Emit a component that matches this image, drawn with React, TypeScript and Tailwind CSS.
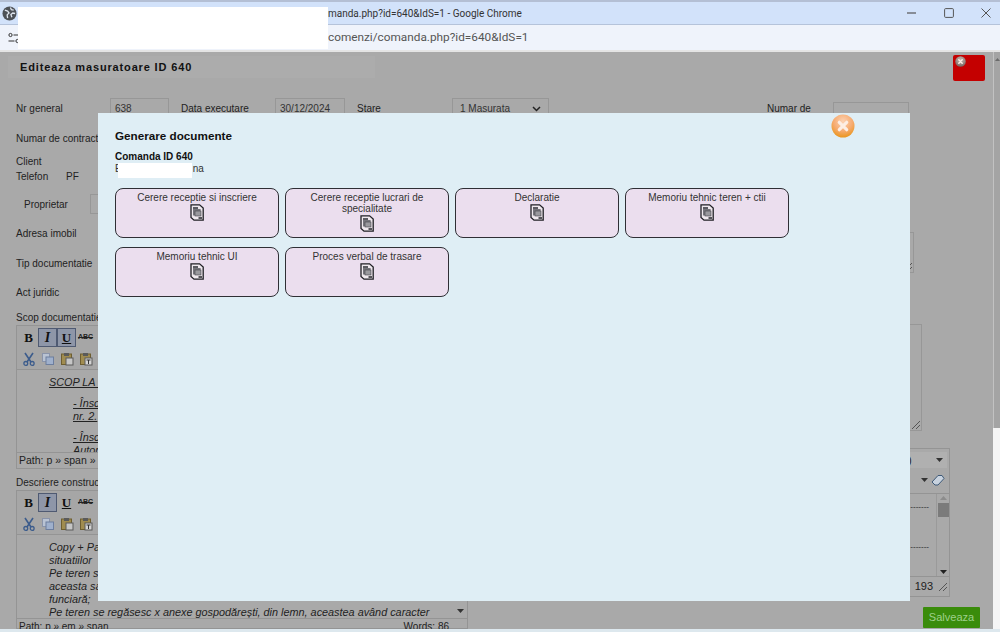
import React from "react";

function DocIcon() {
  return (
    <svg width="14" height="17" viewBox="0 0 14 17" className="block">
      <path d="M1 .8h8.6L13.2 4v12.200H4L1 13.400z" fill="#efe9ee" stroke="#1f1f24" strokeWidth="1.300" />
      <rect x="3" y="3" width="5" height="2" fill="#5c5c62" />
      <rect x="3" y="5" width="7.600" height="6.500" fill="#76767c" />
      <rect x="5" y="7" width="6" height="5" fill="#9a9a9e" stroke="#44444a" strokeWidth=".6" />
      <path d="M8.500 13h3.500v2h-3.500z" fill="#55555a" />
    </svg>
  );
}

function OrangeClose({ gray = false }: { gray?: boolean }) {
  const id = gray ? "gcl" : "ocl";
  return (
    <svg viewBox="0 0 24 24" className="block w-full h-full">
      <defs>
        <radialGradient id={id} cx="50%" cy="30%" r="75%">
          <stop offset="0%" stopColor={gray ? "#c0b0a8" : "#fcd2b4"} />
          <stop offset="55%" stopColor={gray ? "#9d8c86" : "#f6ab70"} />
          <stop offset="100%" stopColor={gray ? "#6b5a55" : "#e8920f"} />
        </radialGradient>
      </defs>
      <circle cx="12" cy="12" r="11.500" fill={`url(#${id})`} />
      <path d="M8.300 8.300l7.400 7.400M15.700 8.300l-7.400 7.400" stroke="#fdeee4" strokeWidth="3.200" strokeLinecap="round" />
    </svg>
  );
}

function Tb({ children, on }: { children: React.ReactNode; on?: boolean }) {
  return (
    <span className={`w-[19px] h-[19px] flex items-center justify-center ${on ? "bg-[#8e96a8] border border-[#4f5a72]" : "border border-transparent"}`}>
      {children}
    </span>
  );
}

function SmallIcon({ kind }: { kind: "cut" | "copy" | "paste" | "pastet" }) {
  if (kind === "cut")
    return (
      <svg width="14" height="14" viewBox="0 0 14 14">
        <path d="M3 1l6 9M11 1L5 10" stroke="#3c5c8c" strokeWidth="1.600" />
        <circle cx="3.800" cy="11.400" r="1.900" fill="none" stroke="#3c5c8c" strokeWidth="1.300" />
        <circle cx="10.200" cy="11.400" r="1.900" fill="none" stroke="#3c5c8c" strokeWidth="1.300" />
      </svg>
    );
  if (kind === "copy")
    return (
      <svg width="14" height="14" viewBox="0 0 14 14">
        <rect x="1.500" y="1.500" width="7" height="8" fill="#b9c3d3" stroke="#8a94aa" />
        <rect x="5" y="5" width="7.500" height="7.500" fill="#9fb0cc" stroke="#6d7e9e" />
      </svg>
    );
  return (
    <svg width="14" height="14" viewBox="0 0 14 14">
      <rect x="1.500" y="2" width="10" height="10.500" fill="#a08c50" stroke="#6e5e30" />
      <rect x="4" y="1" width="5" height="3" fill="#5a5a5a" />
      <rect x="6" y="6" width="7" height="7" fill={kind === "paste" ? "#c6c6c6" : "#d4d4d4"} stroke="#5a5a5a" />
      {kind === "pastet" && <path d="M7.500 8h4M9.500 8v4" stroke="#333" strokeWidth="1" />}
    </svg>
  );
}

function Toolbar({ underlineOn }: { underlineOn?: boolean }) {
  return (
    <div className="h-[44px] pt-[1px] pl-[2px] border-b border-[#949494] bg-[#a6a6a6]">
      <div className="flex items-center h-[21px]">
        <Tb><b className="text-[13px] font-['Liberation_Serif'] text-[#111]">B</b></Tb>
        <Tb on><i className="text-[14px] font-bold font-['Liberation_Serif'] text-[#111]">I</i></Tb>
        <Tb on={underlineOn}><u className="text-[13px] font-bold font-['Liberation_Serif'] text-[#111]">U</u></Tb>
        <Tb><span className="text-[7px] font-bold line-through text-[#222]">ABC</span></Tb>
      </div>
      <div className="flex items-center gap-[5px] h-[21px] pl-[3px]">
        <SmallIcon kind="cut" />
        <SmallIcon kind="copy" />
        <SmallIcon kind="paste" />
        <SmallIcon kind="pastet" />
      </div>
    </div>
  );
}

const Field = ({ w, children }: { w: string; children?: React.ReactNode }) => (
  <span className={`${w} h-[21px] border border-[#979797] flex items-center pl-[4px] text-[#333]`}>{children}</span>
);

function Grip() {
  return (
    <svg width="10" height="10" viewBox="0 0 10 10" className="block">
      <path d="M1 9l8-8M5 9l4-4" stroke="#555" strokeWidth="1" />
    </svg>
  );
}

function Docbtn({ t }: { t: string }) {
  return (
    <button className="w-[164px] h-[50px] flex flex-col items-center pt-[3px] px-[10px] bg-[#ebdeee] border border-[#2f2f35] rounded-[8px] text-[10px] leading-[11px] text-[#333]">
      <span className="mb-[1px]">{t}</span>
      <DocIcon />
    </button>
  );
}

export default function App() {
  return (
    <div className="relative w-[1000px] h-[632px] overflow-hidden flex flex-col bg-[#a9a9a9] font-['Liberation_Sans',sans-serif] text-[10px] text-[#222]">
      {/* title bar */}
      <div className="h-[25px] shrink-0 flex items-center bg-[#d2e2fa] border-t-[2px] border-[#b4bfd4] border-b border-b-[#b5c3da] font-['Roboto',sans-serif]">
        <svg width="15" height="15" viewBox="0 0 16 16" className="ml-[2px]">
          <circle cx="8" cy="8" r="7.500" fill="#4d5156" />
          <path d="M3 4.500l3 1 1.500 2-2 2 .5 3.500M9 1.500l1 2.500 2.500.5M14 8l-2.500-.5-2 1.500 1 3" stroke="#dfe5ee" strokeWidth="1.400" fill="none" />
        </svg>
        <span className="ml-[311px] text-[10px] text-[#333]">manda.php?id=640&amp;IdS=1 - Google Chrome</span>
        <div className="ml-auto flex items-center gap-[27px] pr-[9px] text-[#333]">
          <svg width="10" height="10" viewBox="0 0 10 10"><path d="M0 5h9" stroke="#555" strokeWidth="1.200" /></svg>
          <svg width="10" height="10" viewBox="0 0 10 10"><rect x=".6" y=".6" width="8.800" height="8.800" rx="1" fill="none" stroke="#555" strokeWidth="1" /></svg>
          <svg width="10" height="10" viewBox="0 0 10 10"><path d="M.5.5l9 9M9.500.5l-9 9" stroke="#555" strokeWidth="1" /></svg>
        </div>
      </div>
      {/* url bar */}
      <div className="h-[27px] shrink-0 flex items-center bg-[#eff3fb] border-b-[2px] border-[#e4e4e4] font-['Roboto',sans-serif]">
        <svg width="12" height="12" viewBox="0 0 12 12" className="ml-[8px]">
          <circle cx="2.500" cy="3" r="1.600" fill="none" stroke="#333" />
          <path d="M5.500 3h6M.5 9h6" stroke="#333" strokeWidth="1.200" />
          <circle cx="9.500" cy="9" r="1.600" fill="none" stroke="#333" />
        </svg>
        <span className="ml-[308px] text-[11.800px] text-[#555]">comenzi/comanda.php?id=640&amp;IdS=1</span>
      </div>

      {/* page */}
      <div className="flex-1 flex min-h-0">
        <div className="flex-1 min-w-0 flex flex-col overflow-hidden bg-[#a9a9a9]">
          <div className="flex justify-between shrink-0 pt-[4px] pl-[8px] pr-[8px]">
            <div className="w-[367px] h-[22px] bg-[#acacac] flex items-center pl-[12px] font-bold text-[11px] tracking-[0.85px] text-[#111]">
              Editeaza masuratoare ID 640
            </div>
            <div className="w-[32px] h-[26px] -mt-[1px] bg-[#c40000] rounded-[2px] pl-[2px] pt-[1px]">
              <div className="w-[11px] h-[11px]"><OrangeClose gray /></div>
            </div>
          </div>

          {/* row: general */}
          <div className="flex items-center h-[21px] mt-[17px] pl-[16px] shrink-0">
            <span className="w-[94px]">Nr general</span>
            <Field w="w-[59px]">638</Field>
            <span className="ml-[12px] w-[94px]">Data executare</span>
            <Field w="w-[70px]">30/12/2024</Field>
            <span className="ml-[12px] w-[95px]">Stare</span>
            <span className="w-[97px] h-[21px] border border-[#979797] flex items-center justify-between px-[7px] text-[#333]">
              1 Masurata
              <svg width="9" height="6" viewBox="0 0 9 6"><path d="M1 1l3.500 3.500L8 1" fill="none" stroke="#222" strokeWidth="1.500" /></svg>
            </span>
            <span className="ml-[218px] w-[66px]">Numar de</span>
            <span className="w-[76px] h-[21px] mt-[8px] border border-[#979797]" />
          </div>

          <div className="h-[12px] mt-[14px] pl-[16px] leading-[12px] shrink-0">Numar de contract</div>
          <div className="h-[12px] mt-[11px] pl-[16px] leading-[12px] shrink-0">Client</div>
          <div className="h-[12px] mt-[3px] pl-[16px] leading-[12px] flex shrink-0">
            <span className="w-[50px]">Telefon</span>
            <span>PF</span>
          </div>
          <div className="flex items-center h-[20px] mt-[11px] pl-[24px] shrink-0">
            <span className="w-[66px]">Proprietar</span>
            <span className="w-[20px] h-[20px] border border-[#979797]" />
          </div>

          {/* address + type rows, with the long textarea on the right */}
          <div className="flex pl-[16px] shrink-0 h-[87px] mt-[13px]">
            <div className="w-[82px] flex flex-col gap-[17px] pt-[1px] leading-[12px]">
              <span className="h-[12px]">Adresa imobil</span>
              <span className="h-[12px] mt-[1px] whitespace-nowrap">Tip documentatie</span>
              <span className="h-[12px]">Act juridic</span>
            </div>
            <div className="ml-auto mr-[79px] mt-[5px] w-[100px] h-[41px] border border-[#979797] flex items-end justify-end">
              <Grip />
            </div>
          </div>

          {/* editors */}
          <div className="flex flex-1 min-h-0 pl-[16px] pr-[43px]">
            <div className="w-[452px] shrink-0 flex flex-col">
              <div className="h-[13px] leading-[12px] shrink-0 -mt-[2px]">Scop documentatie</div>
              <div className="h-[144px] shrink-0 border border-[#949494] flex flex-col">
                <Toolbar underlineOn />
                <div className="h-[83px] pl-[32px] pt-[6px] italic text-[10.850px] leading-[13px] text-[#222] overflow-hidden">
                  <div className="underline">SCOP LA RECEPTIE</div>
                  <div className="underline pl-[24px] mt-[8px]">- Înscriere</div>
                  <div className="underline pl-[24px]">nr. 2.</div>
                  <div className="underline pl-[24px] mt-[8px]">- Înscriere</div>
                  <div className="pl-[24px]">Autorizatie</div>
                </div>
                <div className="h-[16px] px-[2px] flex items-center border-t border-[#949494] text-[10.500px] text-[#222]">Path: p » span » em</div>
              </div>
              <div className="h-[13px] leading-[12px] mt-[8px] shrink-0">Descriere constructii</div>
              <div className="flex-1 border border-[#949494] flex flex-col min-h-0">
                <Toolbar />
                <div className="h-[83px] shrink-0 relative flex">
                  <div className="flex-1 pl-[32px] pt-[6px] italic text-[10.850px] leading-[13px] overflow-hidden">
                    <div>Copy + Paste</div>
                    <div>situatiilor</div>
                    <div>Pe teren se</div>
                    <div>aceasta sa</div>
                    <div>funciară;</div>
                    <div className="whitespace-nowrap">Pe teren se regăsesc x anexe gospodărești, din lemn, aceastea având caracter</div>
                  </div>
                  <div className="w-[13px] flex items-end justify-center pb-[5px]">
                    <svg width="7" height="4" viewBox="0 0 7 4"><path d="M0 0h7L3.500 4z" fill="#333" /></svg>
                  </div>
                </div>
                <div className="h-[16px] px-[2px] flex items-center justify-between pr-[18px] border-t border-[#949494]">
                  <span>Path: p » em » span</span>
                  <span>Words: 86</span>
                </div>
              </div>
            </div>

            <div className="flex-1 min-w-0 flex flex-col items-end">
              <div className="w-[120px] h-[107px] mr-[28px] mt-[10px] border border-[#979797] flex items-end justify-end shrink-0">
                <Grip />
              </div>
              <div className="w-[100px] h-[149px] mt-[17px] border border-[#949494] flex flex-col shrink-0 mr-0">
                <div className="h-[45px] border-b border-[#949494] flex flex-col items-end pr-[2px] pt-[3px] text-[#222]">
                  <div className="w-[40px] h-[16px] bg-[#b0b0b0] flex items-center justify-between pr-[4px] pl-[1px]">
                    <span className="text-[11px]">)</span>
                    <svg width="7" height="4" viewBox="0 0 7 4"><path d="M0 0h7L3.500 4z" fill="#333" /></svg>
                  </div>
                  <div className="flex items-center gap-[3px] mt-[6px] pr-[2px]">
                    <svg width="7" height="4" viewBox="0 0 7 4"><path d="M0 0h7L3.500 4z" fill="#333" /></svg>
                    <svg width="14" height="12" viewBox="0 0 14 12"><path d="M1 8l6-6.500h4l2 3-6 6.500H4z" fill="#c8d2de" stroke="#3f5a78" /></svg>
                  </div>
                </div>
                <div className="flex-1 flex min-h-0">
                  <div className="flex-1 flex flex-col items-end pr-[7px] pt-[8px] gap-[30px] text-[8px] leading-[10px]">
                    <span>-------</span>
                    <span>-------</span>
                  </div>
                  <div className="w-[13px] border-l border-[#9a9a9a] flex flex-col items-center py-[2px]">
                    <svg width="7" height="4" viewBox="0 0 7 4"><path d="M3.500 0L7 4H0z" fill="#8c8c8c" /></svg>
                    <span className="w-[11px] h-[14px] bg-[#7b7b7b] mt-[3px]" />
                    <svg width="7" height="4" viewBox="0 0 7 4" className="mt-auto"><path d="M0 0h7L3.500 4z" fill="#222" /></svg>
                  </div>
                </div>
                <div className="h-[20px] border-t border-[#949494] flex items-center justify-end gap-[5px] pr-[1px] text-[11px]">
                  <span>193</span>
                  <Grip />
                </div>
              </div>
              <button className="w-[57px] h-[21px] mt-[10px] -mr-[30px] bg-[#3a8c0b] text-[#9ed08a] text-[11px] rounded-[1px] shrink-0">
                Salveaza
              </button>
            </div>
          </div>
        </div>

        {/* scrollbar */}
        <div className="w-[7px] shrink-0 flex flex-col bg-[#f5f5f5]">
          <div className="h-[376px] bg-[#a4a4a4] border-l border-[#c2c2c2] flex justify-center pt-[6px]">
            <svg width="5" height="3" viewBox="0 0 5 3"><path d="M2.500 0L5 3H0z" fill="#6b6b6b" /></svg>
          </div>
        </div>
      </div>
      <div className="h-[3px] shrink-0 bg-[#dde8ee]" />

      {/* redaction blocks */}
      <div className="absolute left-[18px] top-[7px] w-[310px] h-[42px] bg-white" />

      {/* modal */}
      <div className="absolute left-[98px] top-[113px] w-[812px] h-[488px] bg-[#dfeef5] pl-[17px] pt-[16px]">
        <div className="absolute left-[733px] top-[1px] w-[24px] h-[24px]"><OrangeClose /></div>
        <div className="font-bold text-[11.700px] leading-[14px] text-[#111]">Generare documente</div>
        <div className="font-bold text-[10px] leading-[12px] mt-[8px] text-[#111]">Comanda ID 640</div>
        <div className="relative text-[10px] leading-[12px] h-[12px] text-[#333]">
          E<span className="ml-[71px]">na</span>
          <div className="absolute left-[3px] top-[0px] w-[74px] h-[15px] bg-white" />
        </div>
        <div className="flex flex-wrap gap-x-[6px] gap-y-[9px] mt-[13px] w-[700px]">
          <Docbtn t="Cerere receptie si inscriere" />
          <Docbtn t="Cerere receptie lucrari de specialitate" />
          <Docbtn t="Declaratie" />
          <Docbtn t="Memoriu tehnic teren + ctii" />
          <Docbtn t="Memoriu tehnic UI" />
          <Docbtn t="Proces verbal de trasare" />
        </div>
      </div>
    </div>
  );
}
